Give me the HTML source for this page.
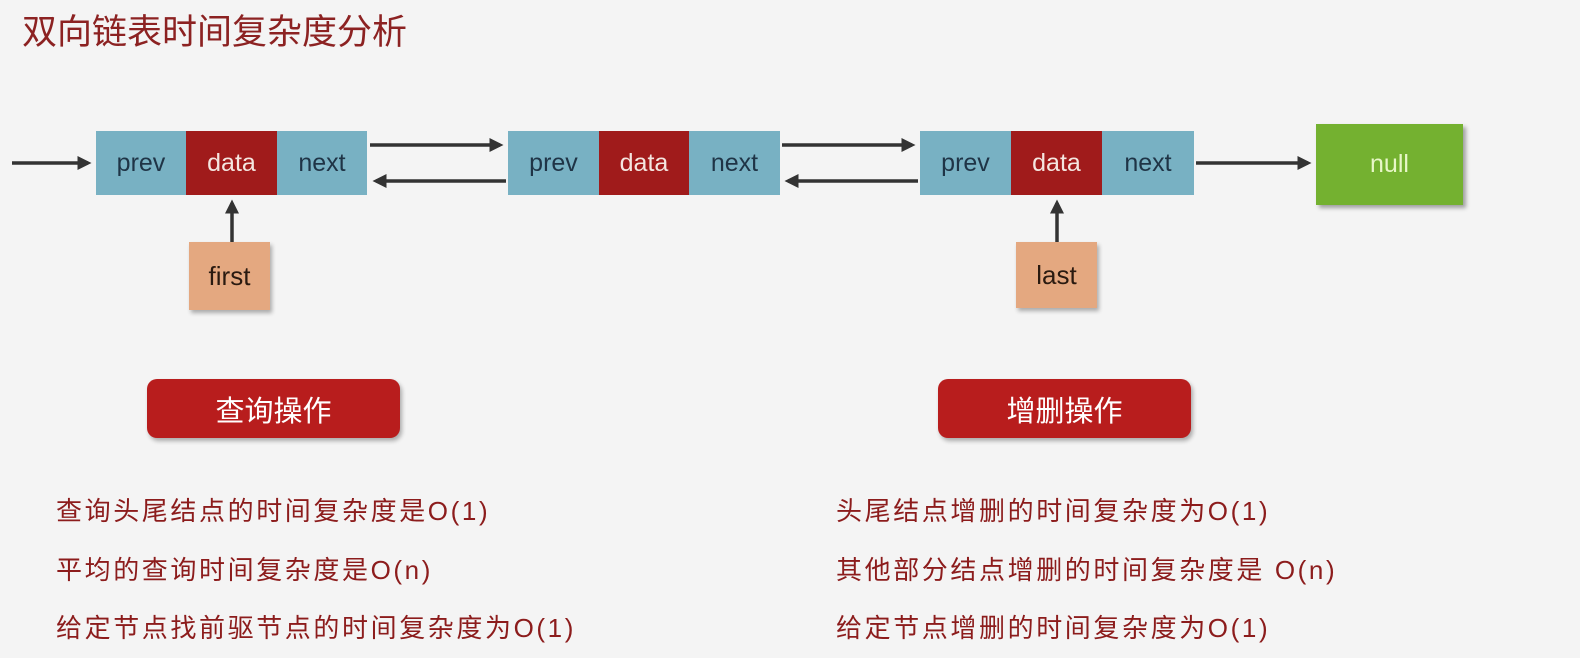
<!DOCTYPE html><html><head><meta charset="utf-8"><style>
body{margin:0;width:1580px;height:658px;background:#f4f4f4;position:relative;overflow:hidden;font-family:"Liberation Sans","Noto Sans CJK SC",sans-serif}
.a{position:absolute}
.c{position:absolute;height:64px;top:131px;display:flex;align-items:center;justify-content:center;font-size:25px}
.p{background:#78b1c3;color:#1f3446}.d{background:#a01b1b;color:#f4e6e0}
.t{position:absolute;color:#8c1c1c;font-size:26px;letter-spacing:2.6px}
.b{position:absolute;top:379px;height:59px;width:253px;background:#b81d1d;border-radius:10px;color:#fff;font-size:29px;display:flex;align-items:center;justify-content:center;box-shadow:2px 3px 4px rgba(0,0,0,.3)}
.o{position:absolute;background:#e4a880;color:#2a1a10;font-size:26px;display:flex;align-items:center;justify-content:center;box-shadow:2px 3px 4px rgba(0,0,0,.3)}
</style></head><body>
<div class="a" style="left:22px;top:4px;font-size:35px;color:#8c2222">双向链表时间复杂度分析</div>
<div class="c p" style="left:96px;width:90px">prev</div><div class="c d" style="left:186px;width:91px">data</div><div class="c p" style="left:277px;width:90px">next</div>
<div class="c p" style="left:508px;width:91px">prev</div><div class="c d" style="left:599px;width:90px">data</div><div class="c p" style="left:689px;width:91px">next</div>
<div class="c p" style="left:920px;width:91px">prev</div><div class="c d" style="left:1011px;width:91px">data</div><div class="c p" style="left:1102px;width:92px">next</div>
<div class="a" style="left:1316px;top:124px;width:147px;height:81px;background:#74b130;color:#e8f7c8;font-size:25px;display:flex;align-items:center;justify-content:center;box-shadow:3px 3px 4px rgba(0,0,0,.35)">null</div>
<div class="o" style="left:189px;top:242px;width:81px;height:68px">first</div>
<div class="o" style="left:1016px;top:242px;width:81px;height:66px">last</div>
<svg class="a" style="left:0;top:0" width="1580" height="658"><defs><marker id="m" markerWidth="4" markerHeight="4" refX="3" refY="2" orient="auto"><path d="M0,0L4,2L0,4z" fill="#333"/></marker></defs>
<g stroke="#333" stroke-width="3.5" marker-end="url(#m)">
<line x1="12" y1="163" x2="88" y2="163"/>
<line x1="370" y1="145" x2="500" y2="145"/><line x1="506" y1="181" x2="376" y2="181"/>
<line x1="782" y1="145" x2="912" y2="145"/><line x1="918" y1="181" x2="788" y2="181"/>
<line x1="1196" y1="163" x2="1308" y2="163"/>
<line x1="232" y1="242" x2="232" y2="203"/><line x1="1057" y1="242" x2="1057" y2="203"/>
</g></svg>
<div class="b" style="left:147px">查询操作</div><div class="b" style="left:938px">增删操作</div>
<div class="t" style="left:56px;top:491px">查询头尾结点的时间复杂度是O(1)</div>
<div class="t" style="left:56px;top:550px">平均的查询时间复杂度是O(n)</div>
<div class="t" style="left:56px;top:608px">给定节点找前驱节点的时间复杂度为O(1)</div>
<div class="t" style="left:836px;top:491px">头尾结点增删的时间复杂度为O(1)</div>
<div class="t" style="left:836px;top:550px">其他部分结点增删的时间复杂度是 O(n)</div>
<div class="t" style="left:836px;top:608px">给定节点增删的时间复杂度为O(1)</div>
</body></html>
